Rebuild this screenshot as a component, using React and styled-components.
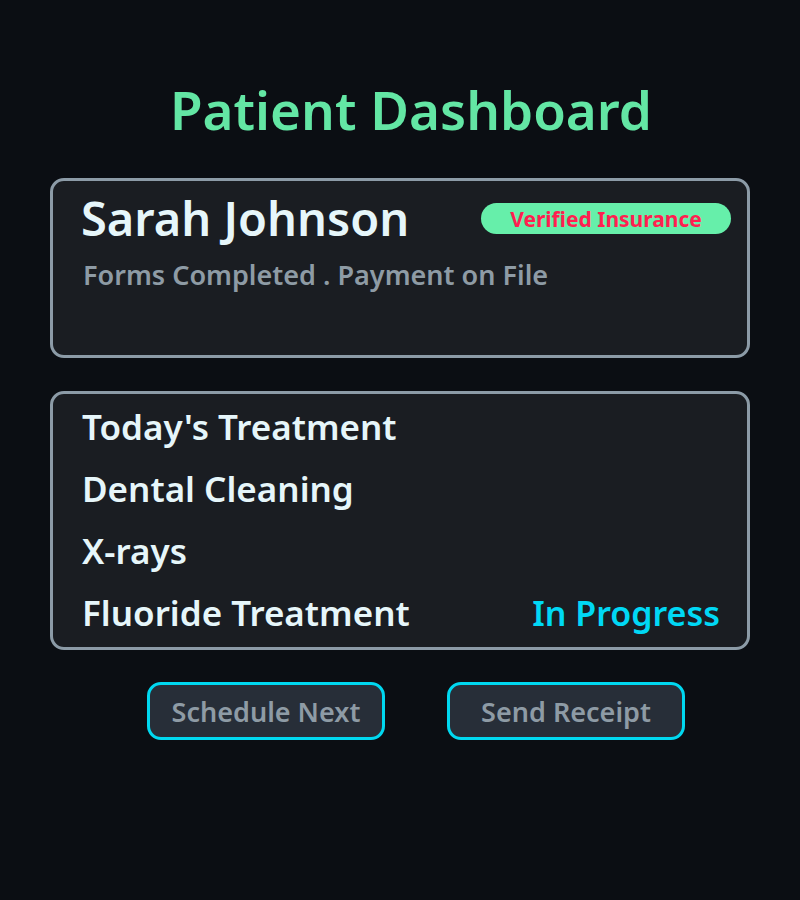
import React from 'react';
import styled, { createGlobalStyle } from 'styled-components';

const GlobalStyle = createGlobalStyle`
  html, body {
    margin: 0;
    padding: 0;
    background: #0b0e13;
  }
  body {
    font-family: "Noto Sans", Roboto, "Liberation Sans", sans-serif;
  }
`;

const Page = styled.div`
  width: 800px;
  height: 900px;
  box-sizing: border-box;
  padding: 82px 50px 0;
  display: flex;
  flex-direction: column;
  overflow: hidden;
`;

const Title = styled.h1`
  margin: 0 0 40px;
  padding-left: 22px;
  font-size: 53px;
  line-height: 56px;
  font-weight: 600;
  color: #63e6a4;
  text-align: center;
`;

const Card = styled.section`
  border: 3px solid #8c9ba7;
  border-radius: 14px;
  background: #1a1d22;
  box-sizing: border-box;
  height: ${p => p.$height}px;
  padding: ${p => p.$padding};
  margin-bottom: 33px;
`;

const HeaderRow = styled.div`
  display: flex;
  justify-content: space-between;
  align-items: flex-start;
`;

const Name = styled.h2`
  margin: 0;
  font-size: 47px;
  line-height: 44px;
  font-weight: 600;
  color: #e6f6fa;
`;

const Badge = styled.span`
  margin-top: 7px;
  width: 250px;
  height: 31px;
  border-radius: 16px;
  background: #66efaa;
  color: #ff1f50;
  font-size: 21px;
  font-weight: 700;
  display: flex;
  align-items: center;
  justify-content: center;
`;

const Status = styled.p`
  margin: 22px 0 0 2px;
  font-size: 27px;
  line-height: 25px;
  font-weight: 600;
  color: #8e9ba5;
`;

const Row = styled.div`
  display: flex;
  justify-content: space-between;
  height: 62px;
  line-height: 62px;
  font-size: 35px;
  font-weight: 600;
  color: #e6f6fa;
`;

const Progress = styled.span`
  font-size: 34px;
  color: #00d8f5;
`;

const Actions = styled.div`
  display: flex;
  gap: 62px;
  padding-left: 97px;
  margin-top: -1px;
`;

const Button = styled.button`
  width: 238px;
  height: 58px;
  box-sizing: border-box;
  border: 3px solid #00d8f0;
  border-radius: 14px;
  background: #272e38;
  color: #8e9ba5;
  font-family: inherit;
  font-size: 27px;
  font-weight: 600;
  cursor: pointer;
`;

const treatments = ["Today's Treatment", 'Dental Cleaning', 'X-rays', 'Fluoride Treatment'];

export default function App() {
  return (
    <>
      <GlobalStyle />
      <Page>
        <Title>Patient Dashboard</Title>
        <Card $height={180} $padding="15px 16px 0 28px">
          <HeaderRow>
            <Name>Sarah Johnson</Name>
            <Badge>Verified Insurance</Badge>
          </HeaderRow>
          <Status>Forms Completed . Payment on File</Status>
        </Card>
        <Card $height={259} $padding="2px 27px 0 29px">
          {treatments.map((t, i) => (
            <Row key={t}>
              <span>{t}</span>
              {i === treatments.length - 1 && <Progress>In Progress</Progress>}
            </Row>
          ))}
        </Card>
        <Actions>
          <Button>Schedule Next</Button>
          <Button>Send Receipt</Button>
        </Actions>
      </Page>
    </>
  );
}
